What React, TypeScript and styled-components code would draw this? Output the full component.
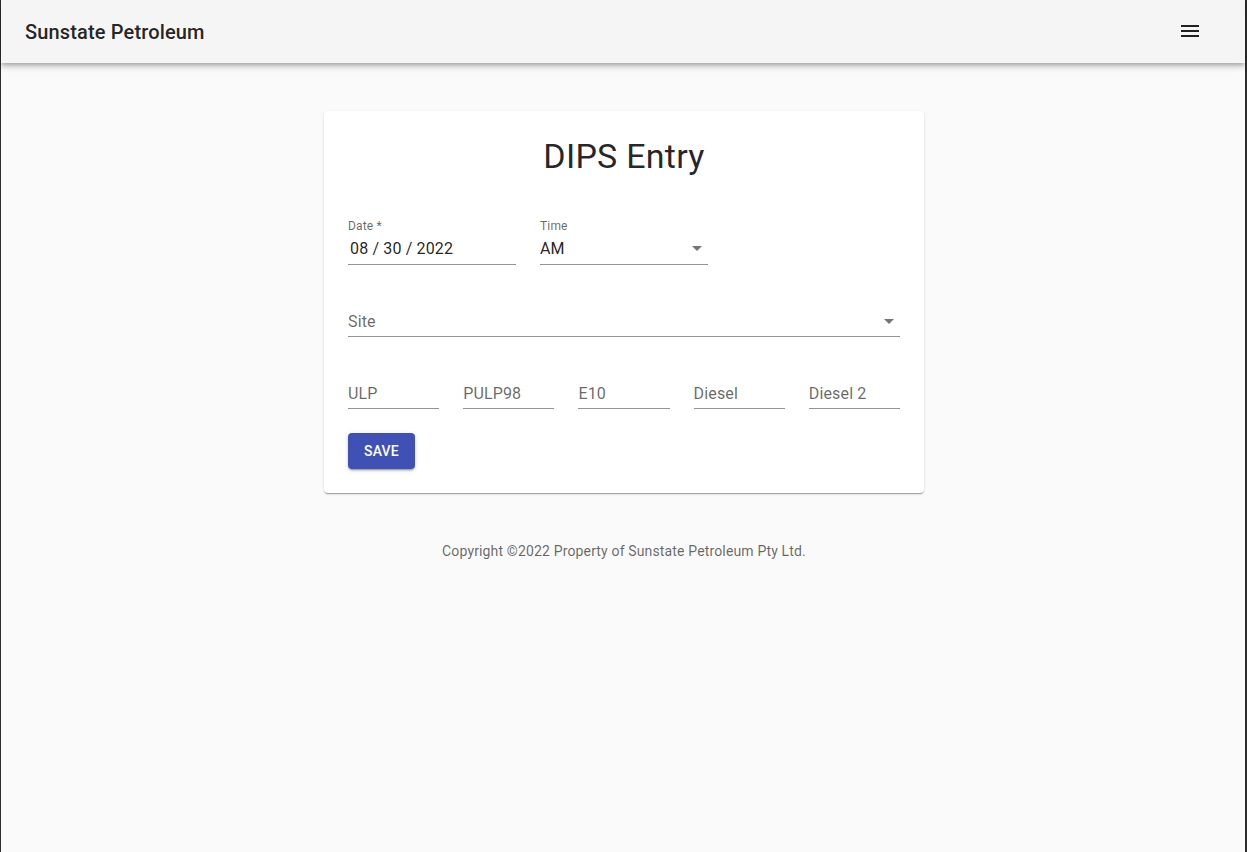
import React from "react";
import styled, { createGlobalStyle } from "styled-components";

const GlobalStyle = createGlobalStyle`
  html, body {
    margin: 0;
    padding: 0;
    background: #fafafa;
    font-family: Roboto, "Helvetica Neue", Arial, sans-serif;
  }
  * { box-sizing: border-box; }
`;

const Frame = styled.div`
  min-height: 852px;
  background: #fafafa;
  border-left: 1px solid #2e2e2e;
  border-right: 2px solid #2e2e2e;
  display: flex;
  flex-direction: column;
`;

const AppBar = styled.header`
  height: 63px;
  background: #f5f5f5;
  display: flex;
  align-items: center;
  justify-content: space-between;
  padding: 0 43px 0 24px;
  box-shadow: 0px 2px 4px -1px rgba(0, 0, 0, 0.2), 0px 4px 5px 0px rgba(0, 0, 0, 0.14),
    0px 1px 10px 0px rgba(0, 0, 0, 0.12);
  position: relative;
  z-index: 2;
`;

const Brand = styled.h1`
  margin: 0;
  font-size: 20px;
  font-weight: 500;
  letter-spacing: 0.15px;
  color: rgba(0, 0, 0, 0.87);
`;

const MenuButton = styled.button`
  border: none;
  background: transparent;
  padding: 0;
  width: 24px;
  height: 24px;
  display: flex;
  color: rgba(0, 0, 0, 0.87);
  margin-top: -1px;
`;

const Main = styled.main`
  display: flex;
  flex-direction: column;
  align-items: center;
  padding: 48px 0 0 2px;
`;

const Card = styled.section`
  width: 600px;
  background: #fff;
  border-radius: 4px;
  padding: 24px;
  box-shadow: 0px 2px 1px -1px rgba(0, 0, 0, 0.2), 0px 1px 1px 0px rgba(0, 0, 0, 0.14),
    0px 1px 3px 0px rgba(0, 0, 0, 0.12);
  display: flex;
  flex-direction: column;
  gap: 24px;
`;

const Title = styled.h2`
  margin: 0 0 16px;
  text-align: center;
  font-size: 34px;
  font-weight: 400;
  line-height: 42px;
  letter-spacing: 0.25px;
  color: rgba(0, 0, 0, 0.87);
`;

const Row = styled.div<{ $cols: number }>`
  display: grid;
  grid-template-columns: repeat(${(p) => p.$cols}, 1fr);
  gap: 24px;
`;

const HalfRow = styled.div`
  display: grid;
  grid-template-columns: 168px 168px;
  gap: 24px;
`;

const Field = styled.div`
  position: relative;
  display: flex;
  flex-direction: column;
  height: 48px;
`;

const SmallLabel = styled.label`
  display: block;
  height: 16px;
  padding-top: 1px;
  font-size: 12px;
  line-height: 16px;
  color: rgba(0, 0, 0, 0.6);
  letter-spacing: 0.15px;
`;

const Spacer = styled.div`
  height: 16px;
`;

const InputLine = styled.div<{ $placeholder?: boolean; $indent?: boolean }>`
  height: 32px;
  padding: ${(p) => (p.$placeholder ? "5px 0 4px" : "4px 0 5px")};
  padding-left: ${(p) => (p.$indent ? "2px" : "0")};
  font-size: 16px;
  line-height: 23px;
  letter-spacing: 0.15px;
  color: ${(p) => (p.$placeholder ? "rgba(0, 0, 0, 0.6)" : "rgba(0, 0, 0, 0.87)")};
  border-bottom: 1px solid rgba(0, 0, 0, 0.42);
  display: flex;
  align-items: center;
  justify-content: space-between;
`;

const Arrow = styled.svg`
  width: 24px;
  height: 24px;
  fill: rgba(0, 0, 0, 0.54);
  margin-right: -1px;
  flex-shrink: 0;
`;

const SaveButton = styled.button`
  align-self: flex-start;
  height: 36px;
  min-width: 64px;
  padding: 0 16px;
  border: none;
  border-radius: 4px;
  background: #3f51b5;
  color: #fff;
  font-family: Roboto, "Helvetica Neue", Arial, sans-serif;
  font-size: 14px;
  font-weight: 500;
  letter-spacing: 0.2px;
  text-transform: uppercase;
  box-shadow: 0px 3px 1px -2px rgba(0, 0, 0, 0.2), 0px 2px 2px 0px rgba(0, 0, 0, 0.14),
    0px 1px 5px 0px rgba(0, 0, 0, 0.12);
`;

const Footer = styled.p`
  margin: 48px 0 0;
  font-size: 14px;
  line-height: 20px;
  letter-spacing: 0.15px;
  color: rgba(0, 0, 0, 0.6);
  text-align: center;
`;

const DropArrow = () => (
  <Arrow viewBox="0 0 24 24">
    <path d="M7 10l5 5 5-5z" />
  </Arrow>
);

const fuels = ["ULP", "PULP98", "E10", "Diesel", "Diesel 2"];

export default function App() {
  return (
    <>
      <GlobalStyle />
      <Frame>
        <AppBar>
          <Brand>Sunstate Petroleum</Brand>
          <MenuButton aria-label="menu">
            <svg viewBox="0 0 24 24" width="24" height="24" fill="currentColor">
              <path d="M3 18h18v-2H3v2zm0-5h18v-2H3v2zm0-7v2h18V6H3z" />
            </svg>
          </MenuButton>
        </AppBar>
        <Main>
          <Card>
            <Title>DIPS Entry</Title>
            <HalfRow>
              <Field>
                <SmallLabel>Date *</SmallLabel>
                <InputLine $indent>08 / 30 / 2022</InputLine>
              </Field>
              <Field>
                <SmallLabel>Time</SmallLabel>
                <InputLine>
                  <span>AM</span>
                  <DropArrow />
                </InputLine>
              </Field>
            </HalfRow>
            <Field>
              <Spacer />
              <InputLine $placeholder>
                <span>Site</span>
                <DropArrow />
              </InputLine>
            </Field>
            <Row $cols={5}>
              {fuels.map((f) => (
                <Field key={f}>
                  <Spacer />
                  <InputLine $placeholder>{f}</InputLine>
                </Field>
              ))}
            </Row>
            <SaveButton>Save</SaveButton>
          </Card>
          <Footer>Copyright ©2022 Property of Sunstate Petroleum Pty Ltd.</Footer>
        </Main>
      </Frame>
    </>
  );
}
